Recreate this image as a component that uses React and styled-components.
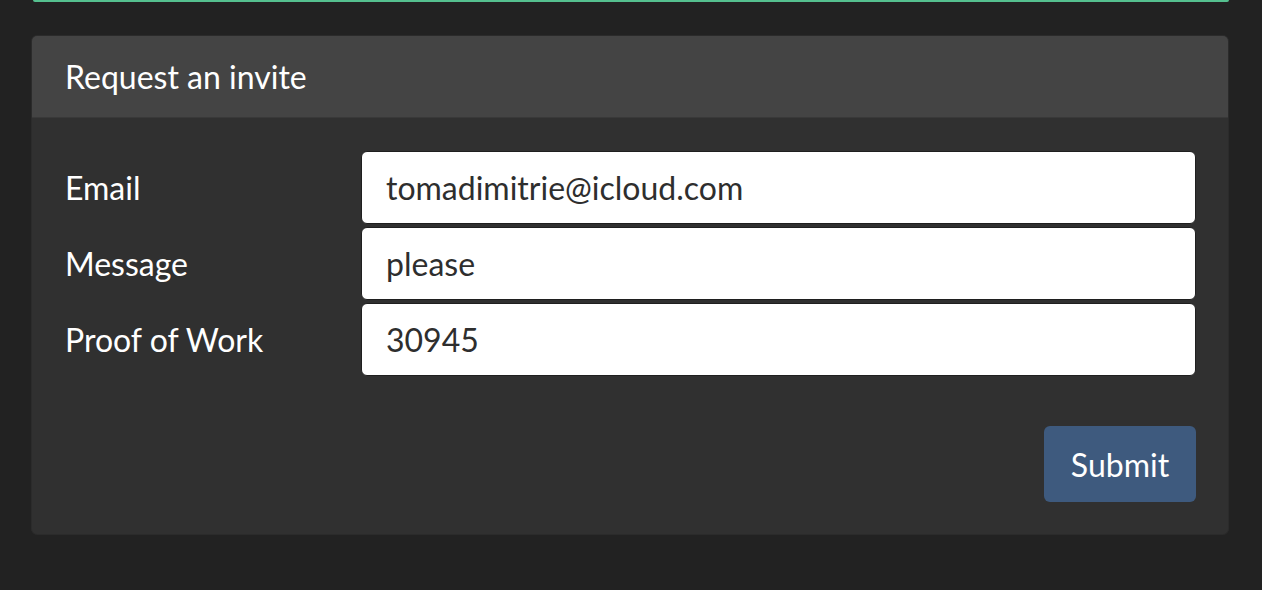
import styled, { createGlobalStyle } from 'styled-components';

const GlobalStyle = createGlobalStyle`
  html, body {
    margin: 0;
    padding: 0;
    background: #222222;
    font-family: Lato, "Open Sans", "Liberation Sans", sans-serif;
  }
  * {
    box-sizing: border-box;
  }
`;

const Page = styled.div`
  padding: 0 33px 0 31px;
`;

const AlertEdge = styled.div`
  height: 2px;
  margin: 0 0 33px 2px;
  background: #55c08f;
  border-radius: 0 0 4px 4px;
`;

const Panel = styled.div`
  background: #303030;
  border: 1px solid #2b2b2b;
  border-radius: 6px;
  overflow: hidden;
`;

const PanelHeader = styled.div`
  height: 82px;
  padding: 0 33px;
  display: flex;
  align-items: center;
  background: #444444;
  border-bottom: 1px solid #393939;
  color: #ffffff;
  font-size: 32px;
`;

const PanelBody = styled.form`
  padding: 33px 32px 32px 33px;
  display: flex;
  flex-direction: column;
`;

const Fields = styled.div`
  display: flex;
  flex-direction: column;
  gap: 3px;
`;

const Row = styled.div`
  display: grid;
  grid-template-columns: 296px 1fr;
  align-items: center;
`;

const Label = styled.label`
  color: #ffffff;
  font-size: 32px;
`;

const Input = styled.input`
  height: 73px;
  width: 100%;
  padding: 0 24px;
  border: 1px solid #1f1f1f;
  border-radius: 6px;
  background: #ffffff;
  color: #2e2e2e;
  font-family: inherit;
  font-size: 32px;
  outline: none;
`;

const Actions = styled.div`
  margin-top: 50px;
  display: flex;
  justify-content: flex-end;
`;

const SubmitButton = styled.button`
  width: 152px;
  height: 76px;
  border: none;
  border-radius: 6px;
  background: #3e5a7e;
  color: #ffffff;
  font-family: inherit;
  font-size: 32px;
  cursor: pointer;
`;

const fields = [
  { id: 'email', label: 'Email', value: 'tomadimitrie@icloud.com' },
  { id: 'message', label: 'Message', value: 'please' },
  { id: 'pow', label: 'Proof of Work', value: '30945' },
];

const App = () => (
  <>
    <GlobalStyle />
    <Page>
      <AlertEdge />
      <Panel>
        <PanelHeader>Request an invite</PanelHeader>
        <PanelBody onSubmit={(e) => e.preventDefault()}>
          <Fields>
            {fields.map((f) => (
              <Row key={f.id}>
                <Label htmlFor={f.id}>{f.label}</Label>
                <Input id={f.id} defaultValue={f.value} />
              </Row>
            ))}
          </Fields>
          <Actions>
            <SubmitButton type='submit'>Submit</SubmitButton>
          </Actions>
        </PanelBody>
      </Panel>
    </Page>
  </>
);

export default App;
